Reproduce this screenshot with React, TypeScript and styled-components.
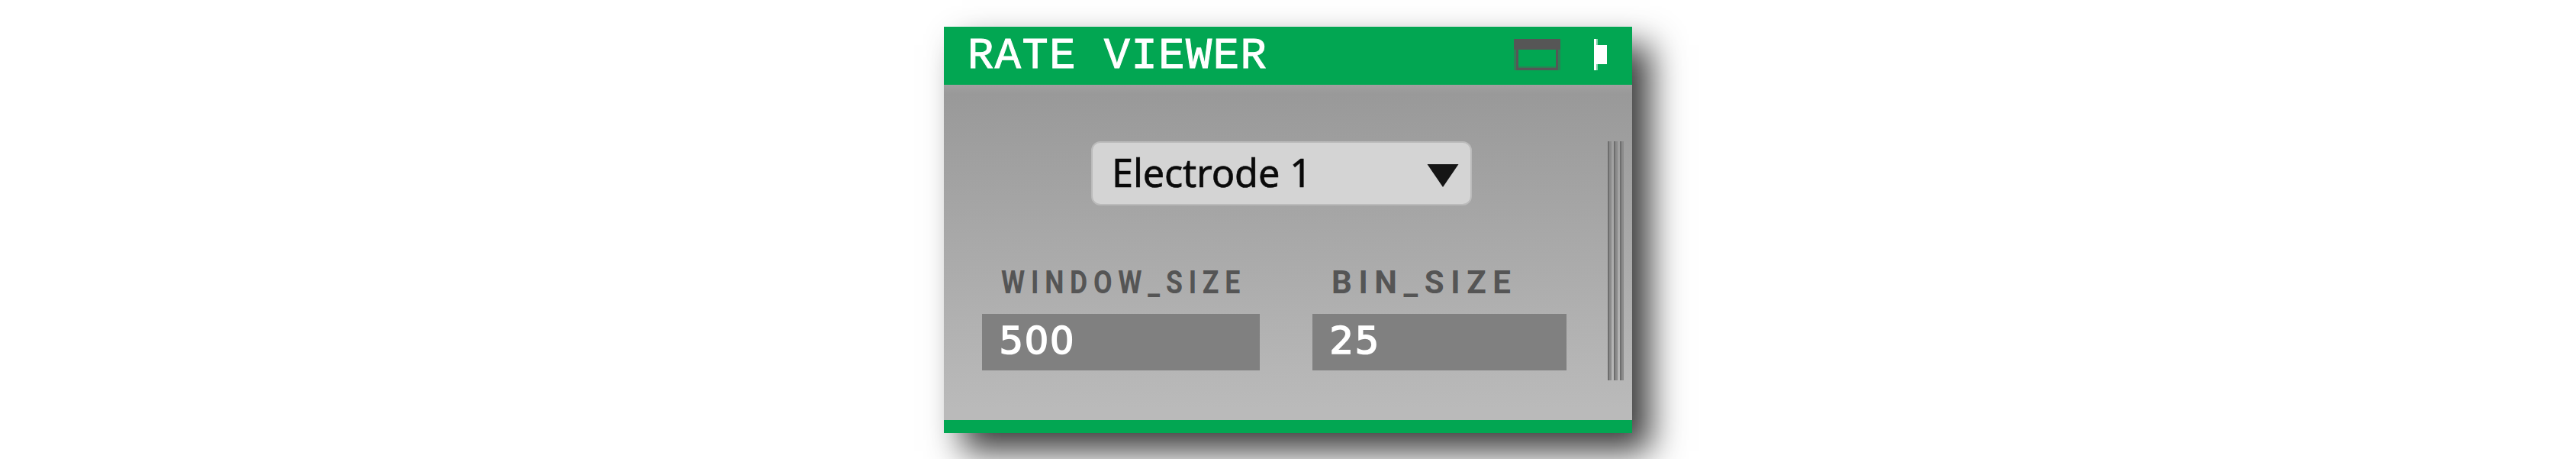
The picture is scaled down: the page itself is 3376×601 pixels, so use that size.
import React from "react";
import styled, { createGlobalStyle } from "styled-components";

const GlobalStyle = createGlobalStyle`
  body { margin: 0; background: #fff; overflow: hidden; }
  * { box-sizing: border-box; }
`;

const Page = styled.main`
  display: flex;
  align-items: flex-start;
  height: 601px;
  padding: 35px 0 0 1237px;
  overflow: hidden;
`;

const Panel = styled.section`
  display: flex;
  flex-direction: column;
  width: 902px;
  height: 532px;
  border-bottom: 17px solid #02a652;
  background: linear-gradient(#a0a0a0 76px, #999 88px, #9b9b9b 110px, #bababa 500px, #bababa);
  box-shadow: 24px 24px 42px rgba(0, 0, 0, 0.77);
`;

const Header = styled.header`
  display: flex;
  align-items: flex-start;
  height: 76px;
  padding: 16px 33px 0 31px;
  background: #02a652;
`;

const Title = styled.h1`
  flex: 1;
  margin: 0;
  font: 400 57px/46px "Liberation Mono", monospace;
  letter-spacing: 1.55px;
  white-space: pre;
  color: #fff;
  -webkit-text-stroke: 1px #fff;
`;

const WindowIcon = styled.svg`
  width: 61px;
  height: 41px;
  margin-right: 44px;
`;

const CollapseIcon = styled.svg`
  width: 17px;
  height: 41px;
`;

const Body = styled.div`
  display: flex;
  flex: 1;
  justify-content: space-between;
  padding: 74px 11px 0 50px;
`;

const Controls = styled.div`
  width: 766px;
`;

const Select = styled.button`
  display: flex;
  align-items: center;
  justify-content: space-between;
  width: 499px;
  height: 84px;
  margin: 0 0 0 143px;
  padding: 0 15px 0 25px;
  border: 2px solid #bbb;
  border-radius: 12px;
  background: #d4d4d4;
`;

const SelectLabel = styled.span`
  margin-top: -3px;
  font: 400 50.5px/60px "Noto Sans", sans-serif;
  letter-spacing: -0.2px;
  white-space: nowrap;
  color: #0a0a0a;
  -webkit-text-stroke: 0.6px #0a0a0a;
`;

const Arrow = styled.svg`
  width: 42px;
  height: 30px;
  margin-top: 6px;
`;

const Fields = styled.div`
  display: flex;
  gap: 69px;
  margin-top: 74px;
`;

const Field = styled.label<{ $width: number }>`
  display: block;
  width: ${(p) => p.$width}px;
`;

const FieldName = styled.span<{ $spacing: number; $stretch: number }>`
  display: block;
  width: max-content;
  height: 68px;
  padding: 0 0 0 25px;
  font: 700 42px/53px Roboto, sans-serif;
  letter-spacing: ${(p) => p.$spacing}px;
  color: #555;
  transform: scaleX(${(p) => p.$stretch});
  transform-origin: 25px 0;
`;

const FieldValue = styled.span`
  display: block;
  height: 74px;
  padding-left: 22.5px;
  background: #808080;
  font: 400 49.5px/70px "DejaVu Sans", sans-serif;
  letter-spacing: 1.7px;
  color: #fff;
  -webkit-text-stroke: 1.7px #fff;
`;

const Grip = styled.div`
  display: flex;
  gap: 3px;
  height: 313px;
`;

const GripLine = styled.i`
  width: 5px;
  border-left: 2px solid #6e6e6e;
  background: #8b8b8b;
`;

export default function App() {
  return (
    <>
      <GlobalStyle />
      <Page>
        <Panel>
          <Header>
            <Title>RATE VIEWER</Title>
            <WindowIcon viewBox="0 0 61 41" shapeRendering="crispEdges">
              <path d="M0 14h3v27H0zM58 14h3v27h-3zM6 36h49v2H6z" fill="#2e7f55" />
              <path d="M0 0h61v14H58v27H3V14H0zM6 14v24h49V14z" fill="#565656" fillRule="evenodd" />
            </WindowIcon>
            <CollapseIcon viewBox="0 0 17 41" shapeRendering="crispEdges">
              <path d="M3 0h2v41H3z" fill="#7fd3a8" />
              <path d="M0 0h3v8h14v25H3v8H0z" fill="#fff" />
            </CollapseIcon>
          </Header>
          <Body>
            <Controls>
              <Select>
                <SelectLabel>Electrode 1</SelectLabel>
                <Arrow viewBox="0 0 42 30">
                  <path d="M0.5 0H41.5L21 30z" fill="#151515" />
                </Arrow>
              </Select>
              <Fields>
                <Field $width={364}>
                  <FieldName $spacing={9.1} $stretch={0.85}>WINDOW_SIZE</FieldName>
                  <FieldValue>500</FieldValue>
                </Field>
                <Field $width={333}>
                  <FieldName $spacing={8.6} $stretch={1}>BIN_SIZE</FieldName>
                  <FieldValue>25</FieldValue>
                </Field>
              </Fields>
            </Controls>
            <Grip>
              <GripLine />
              <GripLine />
              <GripLine />
            </Grip>
          </Body>
        </Panel>
      </Page>
    </>
  );
}
